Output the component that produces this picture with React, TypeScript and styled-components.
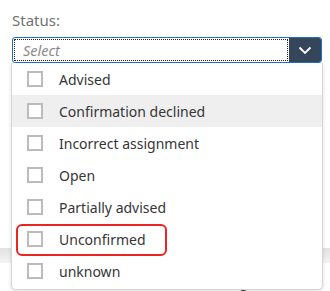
import React from "react";
import styled, { createGlobalStyle } from "styled-components";

const Global = createGlobalStyle`
  html, body { margin: 0; padding: 0; background: #ffffff; }
  body { font-family: "Noto Sans", "Open Sans", sans-serif; width: 330px; height: 291px; overflow: hidden; }
`;

const Page = styled.div`
  position: relative;
  width: 330px;
  height: 291px;
  overflow: hidden;
`;

const Field = styled.div`
  padding: 10px 8px 0 12px;
  display: flex;
  flex-direction: column;
`;

const Label = styled.label`
  font-size: 15px;
  line-height: 20px;
  color: #727272;
  margin-bottom: 7px;
`;

const SelectBox = styled.div`
  height: 26px;
  box-sizing: border-box;
  border: 1px solid #1f6fd1;
  border-radius: 3px;
  display: flex;
  overflow: hidden;
`;

const Input = styled.div`
  flex: 1;
  margin: 1px;
  outline: 1px dotted #222;
  outline-offset: -1px;
  display: flex;
  align-items: center;
  padding-left: 9px;
  font-size: 14.5px;
  font-style: italic;
  color: #8a8a8a;
`;

const Toggle = styled.div`
  width: 32px;
  background: #36465a;
  display: flex;
  align-items: center;
  justify-content: center;
`;

const Band = styled.div`
  margin-top: 185px;
  height: 15px;
  background: linear-gradient(#e2e2e2, #f4f4f4);
`;

const Pager = styled.div`
  display: flex;
  gap: 18px;
  justify-content: flex-end;
  padding: 9px 40px 0 0;
  font-size: 14px;
  color: #444;
`;

const Panel = styled.ul`
  position: absolute;
  left: 11px;
  top: 63px;
  width: 312px;
  height: 227px;
  box-sizing: border-box;
  margin: 0;
  padding: 0;
  list-style: none;
  background: #ffffff;
  border: 1px solid #d6d6d6;
  border-top: none;
  border-radius: 0 0 5px 5px;
  box-shadow: 0 2px 4px rgba(0, 0, 0, 0.12);
`;

const Item = styled.li<{ $active?: boolean }>`
  position: relative;
  height: 32px;
  display: flex;
  align-items: center;
  gap: 16px;
  padding-left: 15px;
  background: ${(p) => (p.$active ? "#efefef" : "transparent")};
  font-size: 14px;
  color: #363636;
`;

const Box = styled.span`
  width: 16px;
  height: 16px;
  box-sizing: border-box;
  border: 2px solid #bcbcbc;
  background: #fff;
`;

const Mark = styled.span`
  position: absolute;
  left: 4px;
  top: 1px;
  width: 151px;
  height: 32px;
  box-sizing: border-box;
  border: 2px solid #ee2424;
  border-radius: 6px;
`;

const options = [
  "Advised",
  "Confirmation declined",
  "Incorrect assignment",
  "Open",
  "Partially advised",
  "Unconfirmed",
  "unknown",
];

export default function App() {
  return (
    <Page>
      <Global />
      <Field>
        <Label>Status:</Label>
        <SelectBox>
          <Input>Select</Input>
          <Toggle>
            <svg width="14" height="9" viewBox="0 0 14 9">
              <path d="M1.5 1.5 L7 7 L12.5 1.5" fill="none" stroke="#fff" strokeWidth="1.8" />
            </svg>
          </Toggle>
        </SelectBox>
      </Field>
      <Band />
      <Pager>
        <span>‹</span>
        <span>Page 1</span>
        <span>›</span>
      </Pager>
      <Panel>
        {options.map((o) => (
          <Item key={o} $active={o === "Confirmation declined"}>
            <Box />
            <span>{o}</span>
            {o === "Unconfirmed" && <Mark />}
          </Item>
        ))}
      </Panel>
    </Page>
  );
}
